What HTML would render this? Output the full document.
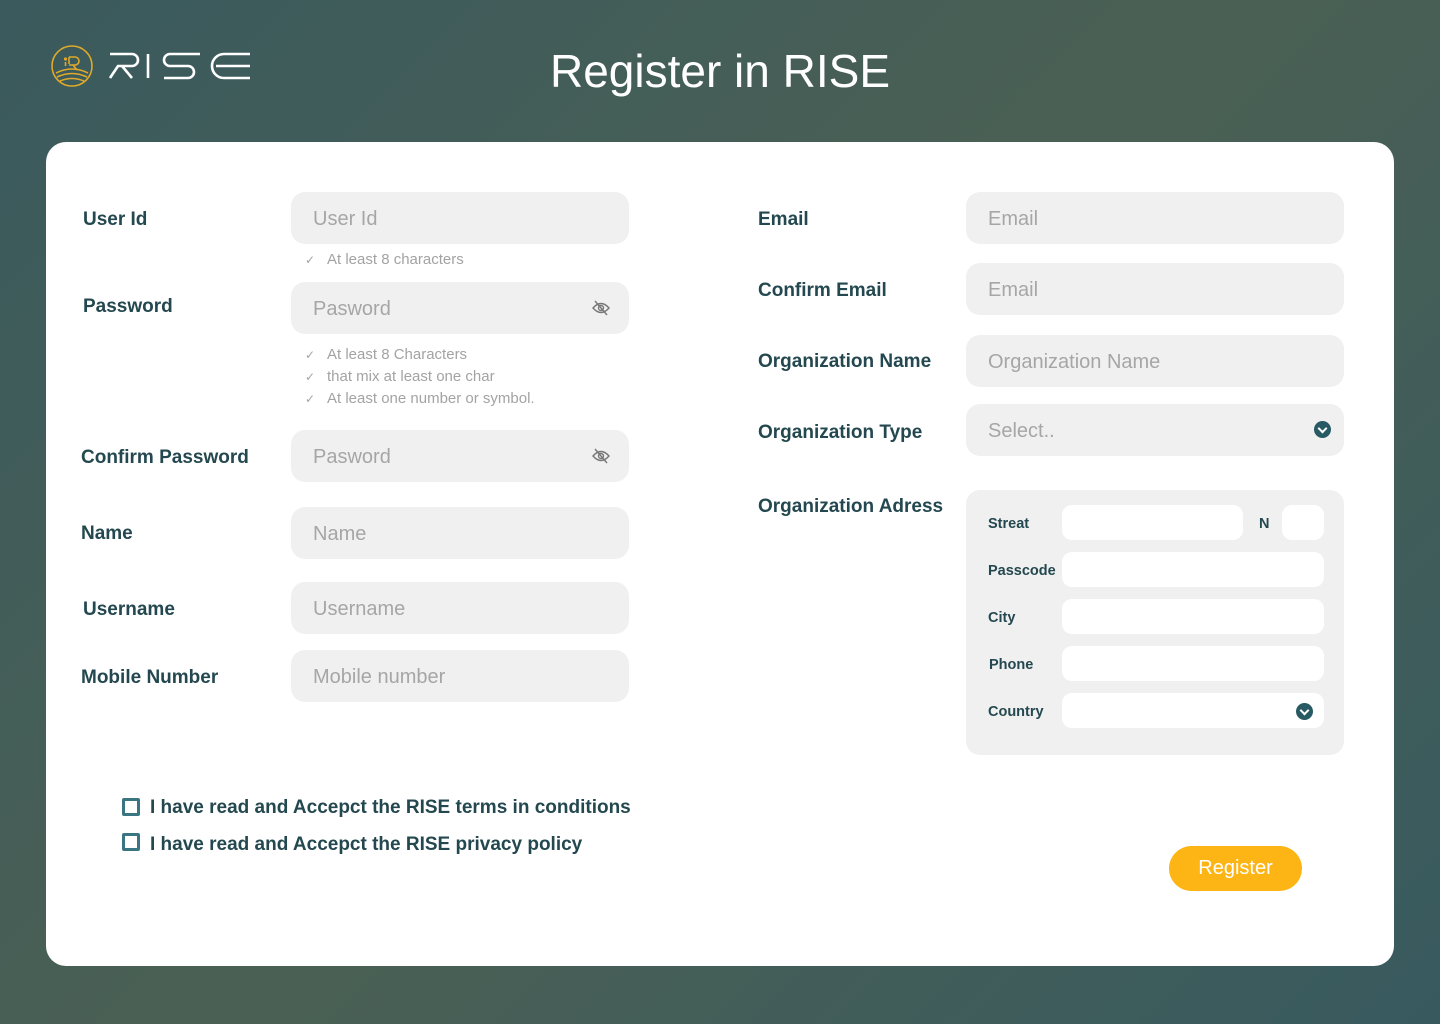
<!DOCTYPE html>
<html><head><meta charset="utf-8"><style>
*{margin:0;padding:0;box-sizing:border-box}
body{width:1440px;height:1024px;overflow:hidden;font-family:"Liberation Sans",sans-serif;background:linear-gradient(135deg,#3a5a5d 0%,#4b6054 50%,#385a5f 100%);position:relative;color:#24484f}
.abs{position:absolute}
h1{position:absolute;left:0;width:1440px;top:44px;text-align:center;color:#fff;font-weight:400;font-size:46px}
.card{position:absolute;left:46px;top:142px;width:1348px;height:824px;background:#fff;border-radius:20px}
.lbl{position:absolute;font-size:19px;color:#24484f;font-weight:600;margin-top:3px}
.in{position:absolute;background:#f0f0f0;border-radius:14px;height:52px;font-size:20px;color:#a6a6a6;padding-left:22px;line-height:54px}
.hint{position:absolute;font-size:15px;color:#a3a3a3;line-height:22px;margin-top:1px}
.hint span{display:inline-block;width:22px;font-size:12px}
.eye{position:absolute;right:18px;top:17px}
.dd{position:absolute;width:17px;height:17px;border-radius:50%;background:#275a64}
.dd:after{content:"";position:absolute;left:5px;top:4px;width:5px;height:5px;border-right:2px solid #fff;border-bottom:2px solid #fff;transform:rotate(45deg)}
.wi{position:absolute;background:#fff;border-radius:10px;height:35px}
.sl{position:absolute;font-size:14.5px;font-weight:600;color:#24484f;margin-top:1px}
.cb{position:absolute;width:18px;height:18px;border:3px solid #3a7682;border-radius:2px}
.ct{position:absolute;font-size:19px;color:#24484f;font-weight:600;margin-top:2px}
</style></head><body>
<svg class="abs" style="left:50px;top:44px" width="44" height="44" viewBox="0 0 44 44" fill="none" stroke="#e0a92a" stroke-width="1.6">
<circle cx="22" cy="22" r="20"/>
<path d="M19 13h6a4 4 0 0 1 0 8h-6M23 21l4 5M19 13v7"/>
<circle cx="15.5" cy="15" r="0.8" fill="#e0a92a"/><path d="M15.5 18v4"/>
<path d="M6 29q16-8 32 0M7 33q15-7 30 0M10 37q12-5 24 0"/>
</svg>
<svg class="abs" style="left:108px;top:52px" width="144" height="28" viewBox="0 0 144 28" fill="none" stroke="#fff" stroke-width="2.6">
<path d="M2 2h22a6 6 0 0 1 0 12H10L2 26M14 14l10 12"/>
<path d="M40 2v24"/>
<path d="M92 2H62a6 6 0 0 0 0 12h18a6 6 0 0 1 0 12H56"/>
<path d="M142 2h-26a12 12 0 0 0 0 24h26M108 14h34"/>
</svg>
<h1>Register in RISE</h1>
<div class="card"></div>

<div class="lbl" style="left:83px;top:206px">User Id</div>
<div class="in" style="left:291px;top:192px;width:338px">User Id</div>
<div class="hint" style="left:305px;top:248px"><span>✓</span>At least 8 characters</div>

<div class="lbl" style="left:83px;top:293px">Password</div>
<div class="in" style="left:291px;top:282px;width:338px">Pasword
<svg class="eye" width="20" height="18" viewBox="0 0 20 18" fill="none" stroke="#777" stroke-width="1.4"><path d="M2 9q8-9 16 0q-8 9-16 0z"/><circle cx="10" cy="9" r="2.5"/><path d="M4 2l12 14"/></svg></div>
<div class="hint" style="left:305px;top:343px"><span>✓</span>At least 8 Characters<br><span>✓</span>that mix at least one char<br><span>✓</span>At least one number or symbol.</div>

<div class="lbl" style="left:81px;top:444px">Confirm Password</div>
<div class="in" style="left:291px;top:430px;width:338px">Pasword
<svg class="eye" width="20" height="18" viewBox="0 0 20 18" fill="none" stroke="#777" stroke-width="1.4"><path d="M2 9q8-9 16 0q-8 9-16 0z"/><circle cx="10" cy="9" r="2.5"/><path d="M4 2l12 14"/></svg></div>

<div class="lbl" style="left:81px;top:520px">Name</div>
<div class="in" style="left:291px;top:507px;width:338px">Name</div>
<div class="lbl" style="left:83px;top:596px">Username</div>
<div class="in" style="left:291px;top:582px;width:338px">Username</div>
<div class="lbl" style="left:81px;top:664px">Mobile Number</div>
<div class="in" style="left:291px;top:650px;width:338px">Mobile number</div>

<div class="lbl" style="left:758px;top:206px">Email</div>
<div class="in" style="left:966px;top:192px;width:378px">Email</div>
<div class="lbl" style="left:758px;top:277px">Confirm Email</div>
<div class="in" style="left:966px;top:263px;width:378px">Email</div>
<div class="lbl" style="left:758px;top:348px">Organization Name</div>
<div class="in" style="left:966px;top:335px;width:378px">Organization Name</div>
<div class="lbl" style="left:758px;top:419px">Organization Type</div>
<div class="in" style="left:966px;top:404px;width:378px">Select..<div class="dd" style="right:13px;top:17px"></div></div>
<div class="lbl" style="left:758px;top:493px">Organization Adress</div>
<div class="abs" style="left:966px;top:490px;width:378px;height:265px;background:#f0f0f0;border-radius:14px"></div>
<div class="sl" style="left:988px;top:515px">Streat</div>
<div class="wi" style="left:1062px;top:505px;width:181px"></div>
<div class="sl" style="left:1259px;top:515px">N</div>
<div class="wi" style="left:1282px;top:505px;width:42px"></div>
<div class="sl" style="left:988px;top:562px">Passcode</div>
<div class="wi" style="left:1062px;top:552px;width:262px"></div>
<div class="sl" style="left:988px;top:609px">City</div>
<div class="wi" style="left:1062px;top:599px;width:262px"></div>
<div class="sl" style="left:989px;top:656px">Phone</div>
<div class="wi" style="left:1062px;top:646px;width:262px"></div>
<div class="sl" style="left:988px;top:703px">Country</div>
<div class="wi" style="left:1062px;top:693px;width:262px"><div class="dd" style="right:11px;top:10px"></div></div>

<div class="cb" style="left:122px;top:798px"></div>
<div class="ct" style="left:150px;top:795px">I have read and Accepct the RISE terms in conditions</div>
<div class="cb" style="left:122px;top:833px"></div>
<div class="ct" style="left:150px;top:832px">I have read and Accepct the RISE privacy policy</div>

<div class="abs" style="left:1169px;top:846px;width:133px;height:45px;background:#fdb515;border-radius:23px;color:#fff;font-size:20px;text-align:center;line-height:45px">Register</div>
</body></html>
